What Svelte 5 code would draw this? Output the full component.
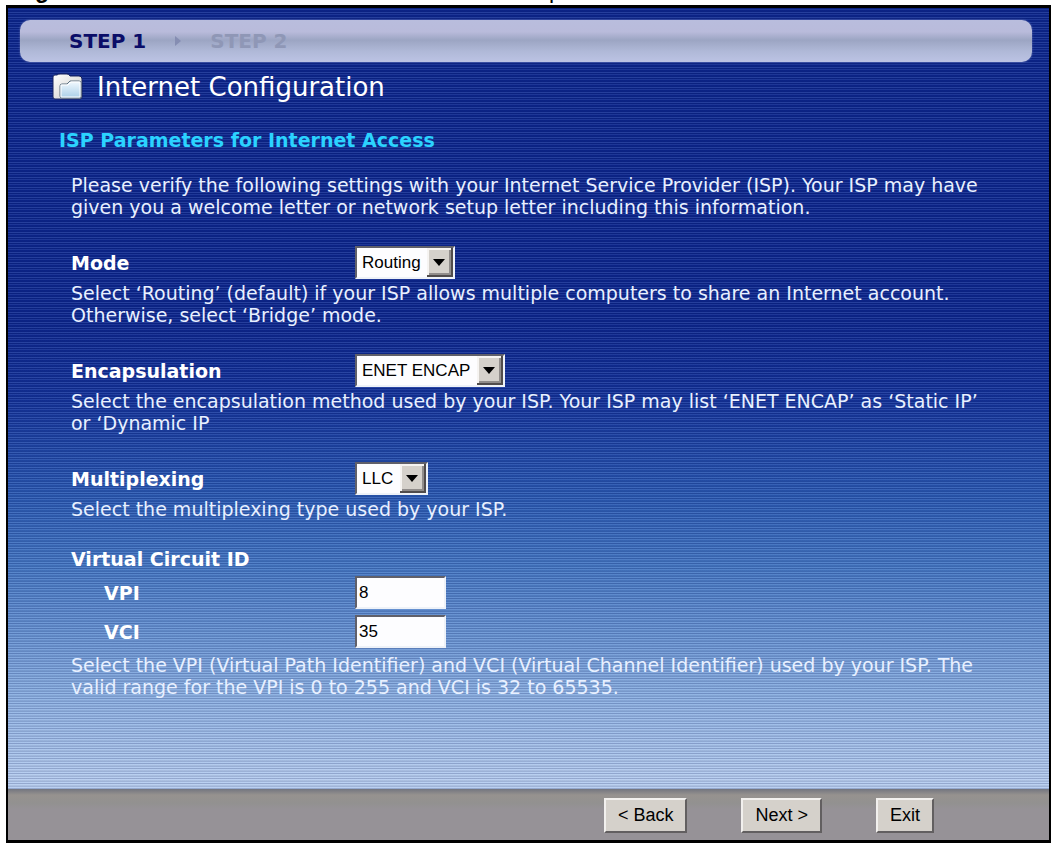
<script>
  let mode = $state('Routing');
  let encapsulation = $state('ENET ENCAP');
  let multiplexing = $state('LLC');
  let vpi = $state('8');
  let vci = $state('35');
</script>

<div class="page">
  <div class="caption" aria-hidden="true"><b>g</b><span>p</span></div>
  <main class="wizard">
    <nav class="steps">
      <span class="step current">STEP 1</span>
      <svg class="arrow" viewBox="0 0 8 12" width="8" height="12"><path d="M1 1 L7 6 L1 11 Z" /></svg>
      <span class="step">STEP 2</span>
    </nav>

    <form class="body" onsubmit={(e) => e.preventDefault()}>
      <h1>
        <svg viewBox="0 0 32 28" width="32" height="28">
          <defs>
            <linearGradient id="back" x2="1" y2="1"><stop stop-color="#fff" /><stop offset="1" stop-color="#c9c9c6" /></linearGradient>
            <linearGradient id="front" x2="0" y2="1"><stop stop-color="#f4faff" /><stop offset="1" stop-color="#a9cfe8" /></linearGradient>
          </defs>
          <path d="M1 4 Q1 2 3 2 L5 2 Q6 1 8 1 L15 1 Q17 1 18 3 L27 3 Q30 3 30 6 L30 24 Q30 26 28 26 L3 26 Q1 26 1 24 Z" fill="url(#back)" stroke="#17235e" />
          <path d="M8 13 Q8 11 10 11 L15 11 L18 8 L27 8 Q29 8 29 10 L29 23 Q29 25 27 25 L10 25 Q8 25 8 23 Z" fill="url(#front)" stroke="#5f7180" />
          <path d="M9 24 L9 12 L16 12 L19 9 L28 9 L28 24 Z" fill="none" stroke="#fff" />
        </svg>
        Internet Configuration
      </h1>
      <h2>ISP Parameters for Internet Access</h2>

      <div class="fields">
        <p>Please verify the following settings with your Internet Service Provider (ISP). Your ISP may have given you a welcome letter or network setup letter including this information.</p>

        <section>
          <div class="row">
            <label for="mode">Mode</label>
            <select id="mode" bind:value={mode}><option>Routing</option></select>
          </div>
          <p>Select ‘Routing’ (default) if your ISP allows multiple computers to share an Internet account. Otherwise, select ‘Bridge’ mode.</p>
        </section>

        <section>
          <div class="row">
            <label for="encapsulation">Encapsulation</label>
            <select id="encapsulation" bind:value={encapsulation}><option>ENET ENCAP</option></select>
          </div>
          <p>Select the encapsulation method used by your ISP. Your ISP may list ‘ENET ENCAP’ as ‘Static IP’ or ‘Dynamic IP</p>
        </section>

        <section>
          <div class="row">
            <label for="multiplexing">Multiplexing</label>
            <select id="multiplexing" bind:value={multiplexing}><option>LLC</option></select>
          </div>
          <p>Select the multiplexing type used by your ISP.</p>
        </section>

        <section>
          <h3>Virtual Circuit ID</h3>
          <div class="row entry">
            <label for="vpi">VPI</label>
            <input id="vpi" type="text" bind:value={vpi} />
          </div>
          <div class="row entry">
            <label for="vci">VCI</label>
            <input id="vci" type="text" bind:value={vci} />
          </div>
          <p>Select the VPI (Virtual Path Identifier) and VCI (Virtual Channel Identifier) used by your ISP. The valid range for the VPI is 0 to 255 and VCI is 32 to 65535.</p>
        </section>
      </div>
    </form>

    <footer>
      <button type="button">&lt; Back</button>
      <button type="button">Next &gt;</button>
      <button type="button">Exit</button>
    </footer>
  </main>
</div>

<style>
  :global(body) {
    background: #fff;
  }
  .page {
    display: flex;
    flex-direction: column;
    min-height: 100vh;
    box-sizing: border-box;
    padding: 0 5px 2px 6px;
    font-family: Verdana, 'DejaVu Sans', sans-serif;
  }
  .caption {
    display: flex;
    align-items: flex-end;
    gap: 500px;
    height: 5px;
    padding-left: 29px;
    overflow: hidden;
    font: 23px/30px 'Liberation Sans', Arial, sans-serif;
  }
  .wizard {
    flex: 1;
    display: flex;
    flex-direction: column;
    border: 2px solid #000;
    border-top-width: 3px;
    border-bottom-width: 3px;
    background:
      repeating-linear-gradient(#00145a38 0 1px, #a8c8ff1c 1px 2px, #00145a18 2px 3px, #00145a28 3px 4px, #a8c8ff28 4px 5px),
      linear-gradient(#0d258a 0, #0d258a 38%, #143196 47%, #2c5ab0 59%, #4677c0 67%, #6a94d0 75%, #92b4e1 83%, #bed2ef 93%);
  }
  .steps {
    display: flex;
    align-items: center;
    gap: 28px;
    height: 42px;
    margin: 12px 17px 0 12px;
    padding-left: 49px;
    border-radius: 10px;
    background: linear-gradient(#b9bddd 0, #b9bbdb 28%, #9ca5c3 48%, #b0b9d8 75%, #bcc3e4 100%);
    box-shadow: 0 0 2px #6f7cb4;
    font-size: 20px;
    font-weight: bold;
  }
  .step {
    color: #8f97b6;
  }
  .step.current {
    color: #0b0d68;
  }
  .arrow {
    fill: #858db2;
  }
  .body {
    flex: 1;
    padding: 0 47px 0 44px;
    color: #e8f0ff;
  }
  h1,
  h2,
  h3,
  p {
    margin: 0;
  }
  h1 {
    display: flex;
    align-items: center;
    gap: 13px;
    margin-top: 10px;
    color: #fff;
    font-size: 26px;
    font-weight: normal;
    line-height: 30px;
  }
  h2 {
    margin: 26px 0 0 7px;
    color: #2bd3ff;
    font-size: 19px;
    line-height: 24px;
  }
  .fields {
    display: flex;
    flex-direction: column;
    gap: 28px;
    padding: 22px 0 0 19px;
    font-size: 19px;
    line-height: 22px;
  }
  .row {
    display: grid;
    grid-template-columns: 284px auto;
    justify-content: start;
    align-items: center;
    margin-bottom: 3px;
  }
  .entry {
    margin-bottom: 6px;
  }
  .entry label {
    padding-left: 33px;
  }
  label,
  h3 {
    color: #fff;
    font-size: 19px;
    font-weight: bold;
    line-height: 22px;
  }
  h3 {
    margin-bottom: 6px;
  }
  select,
  input {
    box-sizing: border-box;
    height: 33px;
    margin: 0;
    border: 2px solid;
    border-color: #60606a #eef2f8 #eef2f8 #60606a;
    border-radius: 0;
    background: #fdfdff;
    color: #000;
    font: 17px 'Liberation Sans', Arial, sans-serif;
  }
  select {
    appearance: none;
    padding: 0 32px 0 5px;
    background:
      url("data:image/svg+xml,%3Csvg xmlns='http://www.w3.org/2000/svg' width='26' height='29'%3E%3Cpath d='M0 0H26V29H0Z' fill='%23504c4c'/%3E%3Cpath d='M0 0H24V27H0Z' fill='%23f6f4f2'/%3E%3Cpath d='M2 2H24V27H2Z' fill='%23918d8b'/%3E%3Cpath d='M2 2H22V25H2Z' fill='%23d5d1cb'/%3E%3Cpath d='M6 11H18L12 18Z'/%3E%3C/svg%3E") right center no-repeat,
      #fdfdff;
  }
  input {
    width: 91px;
    padding: 0 2px;
  }
  footer {
    display: flex;
    justify-content: flex-end;
    align-items: flex-start;
    gap: 54px;
    height: 42px;
    padding: 9px 115px 0 0;
    background: linear-gradient(#73757f 0, #96928f 6px, #929190 14px, #969297 20px);
  }
  button {
    height: 35px;
    padding: 0 12px;
    border: 2px solid;
    border-color: #f2f0ee #625f60 #625f60 #f2f0ee;
    border-radius: 0;
    background: #d5d1cb;
    color: #000;
    font: 18px 'Liberation Sans', Arial, sans-serif;
  }
</style>
